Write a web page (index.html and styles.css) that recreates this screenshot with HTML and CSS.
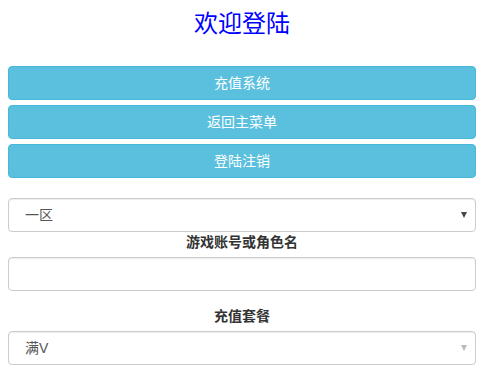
FILE: index.html
```html
<!DOCTYPE html>
<html lang="zh-CN">
  <head>
    <meta charset="UTF-8" />
    <title>欢迎登陆</title>
    <link rel="stylesheet" href="styles.css">
  </head>
  <body>
    <div class="container">
      <h1 class="title">欢迎登陆</h1>

      <div class="menu">
        <button class="btn-info">充值系统</button>
        <button class="btn-info">返回主菜单</button>
        <button class="btn-info">登陆注销</button>
      </div>

      <div class="select-wrap">
        <select class="form-control">
          <option>一区</option>
          <option>二区</option>
        </select>
      </div>

      <div class="form-group">
        <label class="form-label">游戏账号或角色名</label>
        <input class="form-control" type="text">
      </div>

      <div class="form-group">
        <label class="form-label">充值套餐</label>
        <div class="select-wrap faded">
          <select class="form-control">
            <option>满V</option>
          </select>
        </div>
      </div>
    </div>
  </body>
</html>
```

FILE: styles.css
```css
* {
  margin: 0;
  padding: 0;
  box-sizing: border-box;
}

body {
  font-family: 'Liberation Sans', 'Noto Sans CJK SC', sans-serif;
  font-size: 14px;
  line-height: 20px;
  color: #333;
  background: white;
}

.container {
  padding: 0 6px 0 8px;
}

.title {
  margin: 10px 0 29px;
  font-size: 24px;
  line-height: 27px;
  font-weight: normal;
  text-align: center;
  color: #0000ff;
}

.menu {
  display: flex;
  flex-direction: column;
  gap: 5px;
  margin-bottom: 20px;
}

.btn-info {
  display: block;
  width: 100%;
  padding: 6px 12px;
  font-family: inherit;
  font-size: 14px;
  line-height: 20px;
  color: white;
  background-color: #5bc0de;
  border: 1px solid #46b8da;
  border-radius: 4px;
}

.select-wrap {
  position: relative;
}

.select-wrap::after {
  content: "";
  position: absolute;
  right: 9px;
  top: 14px;
  border-left: 3px solid transparent;
  border-right: 3px solid transparent;
  border-top: 6px solid #444;
}

.select-wrap.faded::after {
  border-top-color: #bbb;
}

.form-control {
  display: block;
  width: 100%;
  height: 34px;
  padding: 6px 12px 6px 16px;
  font-family: inherit;
  font-size: 14px;
  line-height: 20px;
  color: #555;
  background-color: white;
  border: 1px solid #ccc;
  border-radius: 4px;
  box-shadow: inset 0 1px 1px rgba(0, 0, 0, 0.075);
  appearance: none;
  -webkit-appearance: none;
}

.form-group {
  margin-bottom: 15px;
}

.form-label {
  display: block;
  margin-bottom: 5px;
  font-weight: bold;
  text-align: center;
}
```
